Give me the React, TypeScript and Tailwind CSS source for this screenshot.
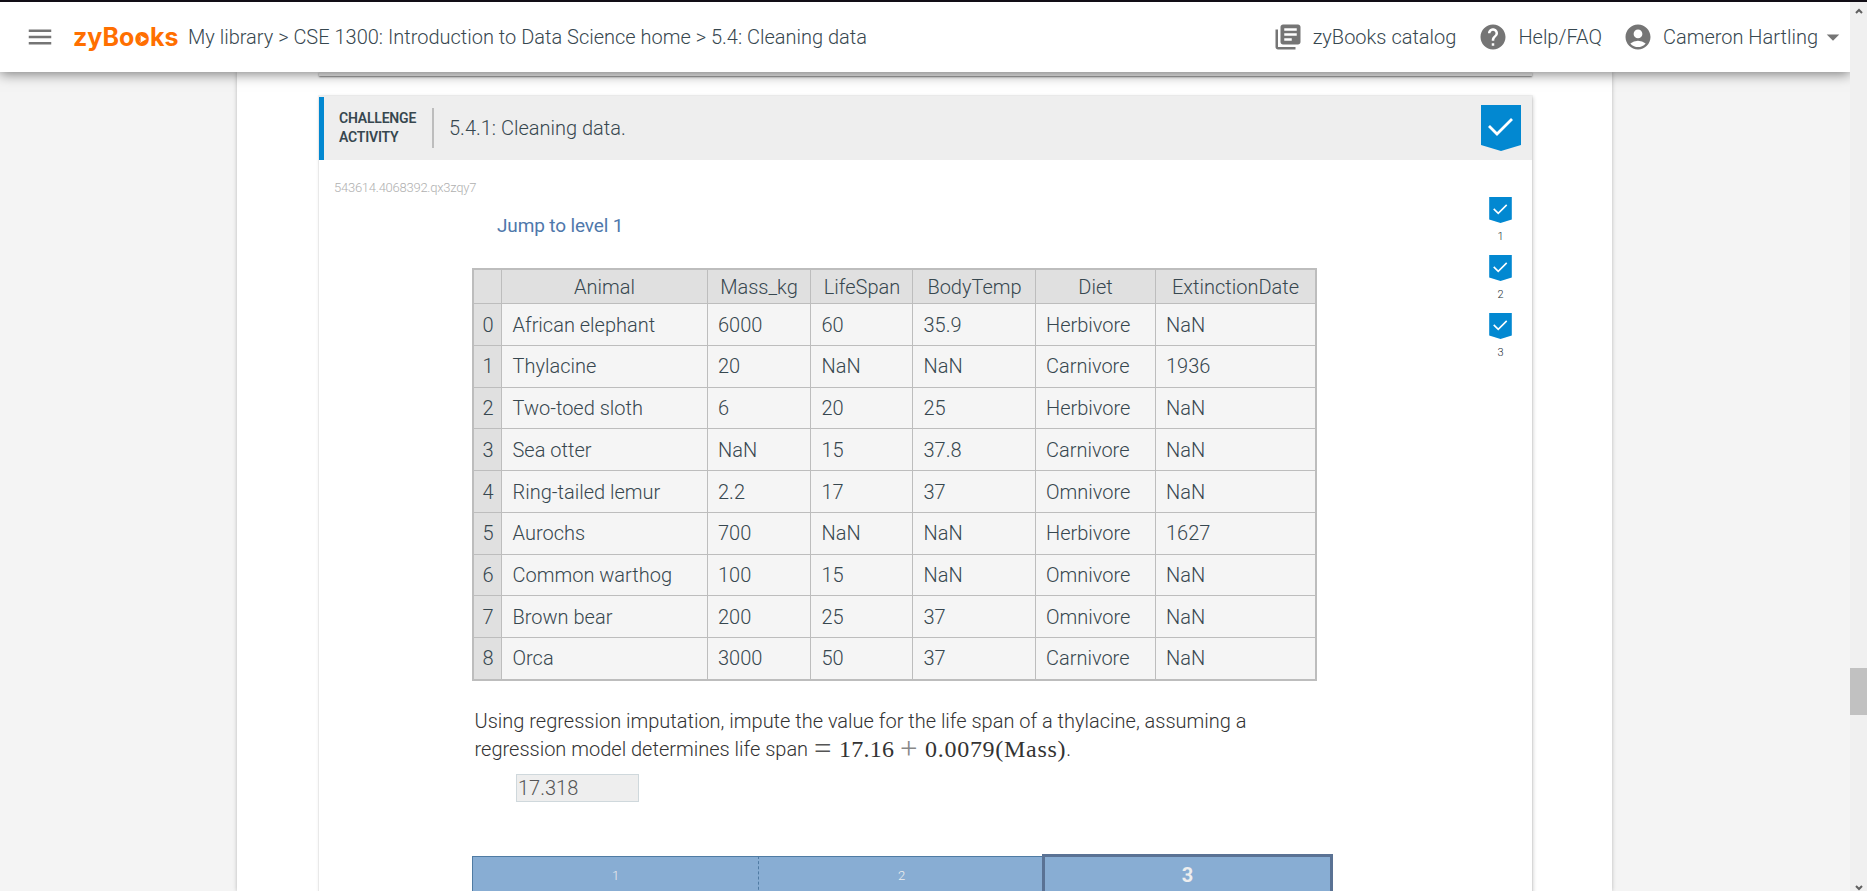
import React from "react";
import { MdLibraryBooks, MdHelp, MdAccountCircle, MdMenu, MdArrowDropDown } from "react-icons/md";

const columns = ["", "Animal", "Mass_kg", "LifeSpan", "BodyTemp", "Diet", "ExtinctionDate"];

const rows: string[][] = [
  ["0", "African elephant", "6000", "60", "35.9", "Herbivore", "NaN"],
  ["1", "Thylacine", "20", "NaN", "NaN", "Carnivore", "1936"],
  ["2", "Two-toed sloth", "6", "20", "25", "Herbivore", "NaN"],
  ["3", "Sea otter", "NaN", "15", "37.8", "Carnivore", "NaN"],
  ["4", "Ring-tailed lemur", "2.2", "17", "37", "Omnivore", "NaN"],
  ["5", "Aurochs", "700", "NaN", "NaN", "Herbivore", "1627"],
  ["6", "Common warthog", "100", "15", "NaN", "Omnivore", "NaN"],
  ["7", "Brown bear", "200", "25", "37", "Omnivore", "NaN"],
  ["8", "Orca", "3000", "50", "37", "Carnivore", "NaN"],
];

const rowPadding = ["pt-[9px]", "pt-2", "pt-2", "pt-[9px]", "pt-[9px]", "pt-2", "pt-2", "pt-[9px]", "pt-2"];
const columnPadding = ["pl-[8.5px]", "pl-[10.5px]", "pl-[10px]", "pl-[10.5px]", "pl-[10.5px]", "pl-[10px]", "pl-[10px]"];

function Badge({ className }: { className: string }) {
  return (
    <svg viewBox="0 0 40 46" className={className}>
      <path d="M0 0H40V40L20 46L0 40Z" fill="#0288d1" />
      <path d="M8 21L16 29L31 14" fill="none" stroke="#fff" strokeWidth="2.8" />
    </svg>
  );
}

function Logo() {
  return (
    <span className="ml-[18px] w-[115px] font-[Inter] text-[25px] leading-6 font-bold tracking-[0.05px] text-[#ff6f00]">
      zyBo
      <span className="relative">
        o
        <svg viewBox="0 0 10 10" className="absolute left-[3px] top-[12px] size-[10px]">
          <circle cx="5" cy="5" r="4.2" fill="#ff6f00" />
          <path d="M2.6 1.4L8.6 5L2.6 8.6Z" fill="#fff" />
        </svg>
      </span>
      ks
    </span>
  );
}

function TopBar() {
  return (
    <header className="relative z-10 flex h-[72px] shrink-0 items-center border-t-2 border-[#120e16] bg-white pl-[25px] pr-[2px] text-xl leading-6 font-light text-[#37474f] shadow-[0_2px_12px_rgba(0,0,0,0.5)]">
      <MdMenu className="size-[30px] text-[#757575]" />
      <Logo />
      <span className="whitespace-nowrap">My library &gt; CSE 1300: Introduction to Data Science home &gt; 5.4: Cleaning data</span>
      <div className="ml-auto flex items-center whitespace-nowrap">
        <MdLibraryBooks className="mr-[10px] size-[30px] text-[#757575]" />
        <span className="mr-[22px]">zyBooks catalog</span>
        <MdHelp className="mr-[10px] size-[30px] text-[#757575]" />
        <span className="mr-[21px]">Help/FAQ</span>
        <MdAccountCircle className="mr-[10px] size-[30px] text-[#757575]" />
        <span>Cameron Hartling</span>
        <MdArrowDropDown className="size-[30px] text-[#757575]" />
      </div>
    </header>
  );
}

function DataTable() {
  return (
    <div className="grid w-[845px] grid-cols-[28px_206px_103px_102px_123px_120px_159px] grid-rows-[34px_42px_42px_41px_42px_42px_42px_41px_42px_41px] border-2 border-[#bdbdbd] bg-[#f5f5f5] leading-6">
      {columns.map((name, c) => (
        <div
          key={c}
          className={"flex justify-center border-b border-[#bdbdbd] bg-[#e0e0e0] pt-[5px] " + (c < 6 ? "border-r " : "") + (c === 3 || c === 4 ? "pl-px" : "")}
        >
          {name}
        </div>
      ))}
      {rows.map((row, r) =>
        row.map((value, c) => (
          <div
            key={r + "-" + c}
            className={
              "whitespace-nowrap border-[#bdbdbd] " +
              rowPadding[r] + " " + columnPadding[c] + " " +
              (c === 0 ? "bg-[#e0e0e0] " : "") +
              (c < 6 ? "border-r " : "") +
              (r < 8 ? "border-b" : "")
            }
          >
            {value}
          </div>
        ))
      )}
    </div>
  );
}

function Formula() {
  return (
    <span className="flex h-7 items-center font-['Liberation_Serif'] text-[24px] font-normal">
      <span className="ml-[6px] w-[25px] text-[31px] text-[#555]">=</span>
      <span className="w-[61px] tracking-[0.2px]">17.16</span>
      <span className="w-[25px] text-[31px] text-[#888]">+</span>
      <span className="tracking-[0.7px]">0.0079(Mass)</span>
    </span>
  );
}

function ActivityCard() {
  return (
    <section className="ml-[82px] mt-[20px] h-[900px] w-[1213px] bg-white shadow-[1px_1px_4px_rgba(0,0,0,0.2),0_0_0_1px_rgba(0,0,0,0.04)]">
      <div className="flex h-16 items-center bg-[#eeeeee] pr-[11px]">
        <div className="h-[63px] w-[5px] self-end bg-[#0288d1]" />
        <div className="ml-[15px] w-[93px] text-sm leading-[19px] font-semibold tracking-[-0.2px] text-[#37474f]">
          CHALLENGE
          <br />
          ACTIVITY
        </div>
        <div className="h-10 w-[2px] bg-[#bdbdbd]" />
        <div className="ml-[15px]">5.4.1: Cleaning data.</div>
        <Badge className="ml-auto h-[46px] w-10" />
      </div>
      <div className="flex">
        <div className="w-[1170px]">
          <div className="pl-[15px] pt-[20px] text-[13px] leading-4 tracking-[-0.25px] text-[#b0b0b0]">543614.4068392.qx3zqy7</div>
          <div className="mt-[18px] pl-[178px] text-[19px] leading-6 font-normal tracking-[-0.13px] text-[#4f78ab]">Jump to level 1</div>
          <div className="mt-[30px] pl-[153px]">
            <DataTable />
            <div className="mt-[26px] pl-[2.5px] leading-7 text-[#333]">
              Using regression imputation, impute the value for the life span of a thylacine, assuming a
              <br />
              <div className="flex h-7 items-center whitespace-pre">
                regression model determines life span
                <Formula />.
              </div>
            </div>
            <div className="ml-[44px] mt-[11px] flex h-7 w-[123px] items-center border border-[#cfd8dc] bg-[#eeeeee] pl-[1px] text-[#555]">17.318</div>
            <div className="mt-[52px] flex items-start text-[13px] text-[#eeeeee]">
              <div className="mt-[2px] flex h-20 w-[287px] justify-center border-l border-t border-r border-[#4f7ba3] bg-[#88add3] pt-[10px] [border-right-style:dashed]">1</div>
              <div className="mt-[2px] flex h-20 w-[283px] justify-center border-t border-[#4f7ba3] bg-[#88add3] pl-[2px] pt-[10px]">2</div>
              <div className="flex h-20 w-[291px] justify-center border-[3px] border-[#5a7294] bg-[#88add3] pt-[6px] text-xl leading-6 font-bold">3</div>
            </div>
          </div>
        </div>
        <div className="flex w-[23px] flex-col items-center pt-[37px] text-[11px] leading-4 text-[#263238]">
          {["1", "2", "3"].map((n) => (
            <div key={n} className="flex h-[58px] flex-col items-center">
              <Badge className="h-[26px] w-[23px]" />
              <span className="mt-[6px]">{n}</span>
            </div>
          ))}
        </div>
      </div>
    </section>
  );
}

export default function App() {
  return (
    <div className="flex h-[891px] w-[1867px] overflow-hidden bg-[#f4f4f4] font-[Roboto,sans-serif] text-xl font-light text-[#37474f]">
      <div className="flex h-full w-[1850px] flex-col overflow-hidden">
        <TopBar />
        <main className="ml-[237px] h-[819px] w-[1375px] bg-white shadow-[0_0_4px_rgba(0,0,0,0.25)]">
          <div className="ml-[82px] h-1 w-[1213px] bg-[#eeeeee] shadow-[0_1px_2px_rgba(0,0,0,0.5)]" />
          <ActivityCard />
        </main>
      </div>
      <div className="flex h-full w-[17px] flex-col items-center border-t-2 border-[#120e16] bg-[#f0f0f0]">
        <svg viewBox="0 0 8 6" className="mt-[6px] h-[6px] w-2">
          <path d="M1 5L4 2L7 5" fill="none" stroke="#606060" strokeWidth="2" />
        </svg>
        <div className="mt-[654px] h-[47px] w-full bg-[#c1c1c1]" />
        <svg viewBox="0 0 8 6" className="mt-auto h-[6px] w-2">
          <path d="M1 1L4 4L7 1" fill="none" stroke="#606060" strokeWidth="2" />
        </svg>
      </div>
    </div>
  );
}
